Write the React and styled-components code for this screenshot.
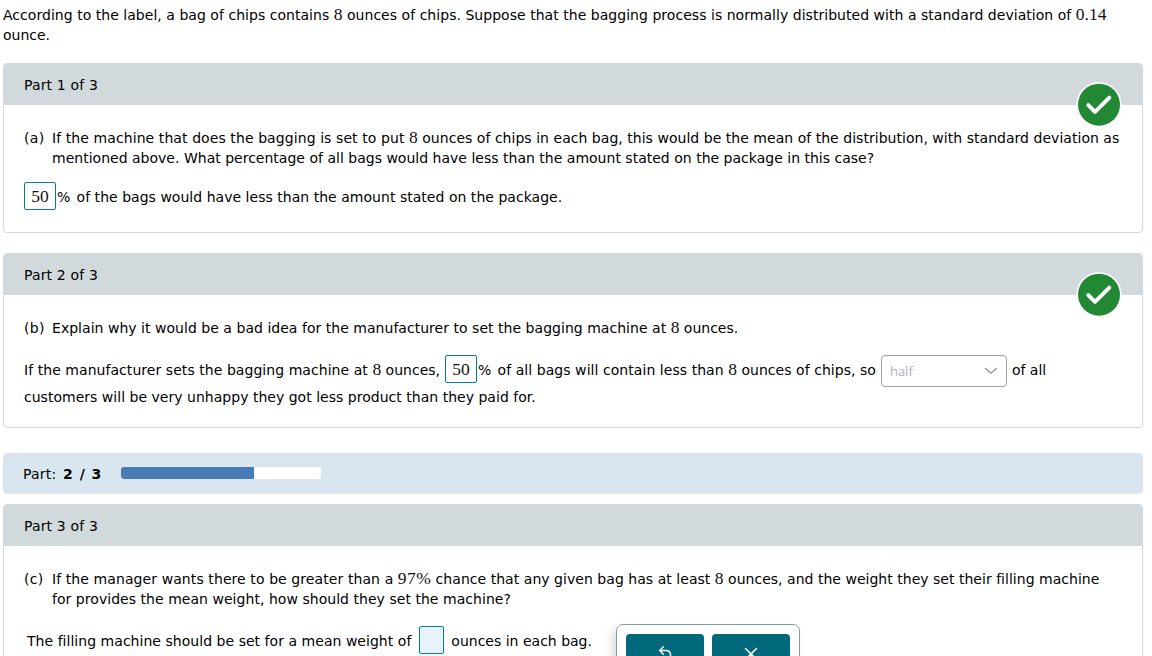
import React from "react";
import styled, { createGlobalStyle } from "styled-components";

const GlobalStyle = createGlobalStyle`
  * { box-sizing: border-box; }
  body {
    margin: 0;
    background: #fff;
    color: #000;
    font-family: Verdana, "DejaVu Sans", sans-serif;
    font-size: 14px;
    line-height: 20px;
    overflow: hidden;
  }
`;

const Page = styled.main`
  width: 1152px;
  height: 656px;
  overflow: hidden;
  padding: 5px 9px 0 3px;
`;

const Line = styled.div`
  white-space: pre;
  height: 20px;
`;

const Text = styled.span`
  letter-spacing: ${(p) => p.$spacing}px;
`;

const Percent = styled.span`
  letter-spacing: 1.8px;
`;

const Intro = styled.header`
  height: 58px;
`;

const Panel = styled.section`
  position: relative;
  height: ${(p) => p.$height}px;
  margin-bottom: ${(p) => p.$gap || 0}px;
  border: 1px solid #d1d9dc;
  border-radius: 4px;
`;

const PanelHeader = styled.div`
  height: 41px;
  padding: 11px 20px 0;
  background: #d1d9dc;
  border-radius: 3px 3px 0 0;
  letter-spacing: 0.15px;
`;

const PanelBody = styled.div`
  padding: 23px 20px 0;
`;

const Question = styled.div`
  display: grid;
  grid-template-columns: 28px 1fr;
  margin-bottom: ${(p) => p.$gap}px;
`;

const Marker = styled.span`
  letter-spacing: 0.3px;
`;

const Badge = styled.div`
  position: absolute;
  top: 18px;
  right: 20px;
  width: 46px;
  height: 46px;
  svg { display: block; }
`;

const Num = styled.span`
  font-family: "Liberation Serif", serif;
  font-size: 17.5px;
  line-height: 1;
  letter-spacing: ${(p) => p.$spacing || 0}px;
  color: #111;
`;

const AnswerRow = styled.div`
  display: flex;
  align-items: flex-start;
  height: ${(p) => p.$height}px;
  padding-left: ${(p) => p.$indent || 0}px;

  > ${Line} {
    margin-top: 5px;
  }
`;

const Answer = styled.span`
  display: inline-flex;
  align-items: center;
  justify-content: center;
  flex: none;
  width: ${(p) => (p.$empty ? 25 : 32)}px;
  height: 28px;
  margin: 0 ${(p) => p.$after || 1}px 0 ${(p) => p.$before || 0}px;
  padding-top: 2px;
  border: 1px solid #007f8f;
  border-radius: 2px;
  background: ${(p) => (p.$empty ? "#e6f4f9" : "#fff")};
`;

const Select = styled.div`
  display: flex;
  align-items: center;
  justify-content: space-between;
  width: 126px;
  height: 32px;
  margin: 0 5px;
  padding: 0 8px;
  border: 1px solid #9c9e9f;
  border-radius: 4px;
  color: #b0b2b3;
  font-family: "Open Sans", sans-serif;
  font-size: 13px;
`;

const ProgressBar = styled.div`
  display: flex;
  align-items: center;
  height: 41px;
  margin-bottom: 10px;
  padding-left: 20px;
  border-radius: 4px;
  background: #dae6ef;
`;

const ProgressLabel = styled.span`
  width: 98px;
  letter-spacing: 0.2px;
  white-space: pre;
`;

const Count = styled.b`
  margin-left: 2px;
  letter-spacing: 0.5px;
  word-spacing: 1px;
`;

const Track = styled.div`
  width: 200px;
  height: 12px;
  margin-top: -1px;
  overflow: hidden;
  border-radius: 3px;
  background: #fff;
`;

const Fill = styled.div`
  width: 133px;
  height: 100%;
  background: #477cb7;
`;

const Toolbar = styled.div`
  position: absolute;
  top: 119px;
  left: 612px;
  display: flex;
  gap: 8px;
  width: 184px;
  height: 60px;
  padding: 9px;
  border: 1px solid #7f9ca3;
  border-radius: 7px;
  background: #fff;
  box-shadow: -4px 5px 8px rgba(60, 90, 100, 0.2);
`;

const ToolButton = styled.button`
  display: flex;
  justify-content: center;
  width: 78px;
  height: 40px;
  padding: 11px 0 0;
  border: 0;
  border-radius: 4px;
  background: #006a7c;
`;

const CheckBadge = () => (
  <Badge>
    <svg width="46" height="46" viewBox="0 0 46 46">
      <circle cx="23" cy="22.7" r="22.7" fill="#fff" />
      <circle cx="23" cy="22.7" r="21" fill="#228833" />
      <path d="M12.3 23.2 19 29.8 33.3 15.7" fill="none" stroke="#fff" strokeWidth="4" strokeLinecap="round" strokeLinejoin="round" />
    </svg>
  </Badge>
);

export default function App() {
  return (
    <>
      <GlobalStyle />
      <Page>
        <Intro>
          <Line>
            <Text $spacing={0.035}>According to the label, a bag of chips contains </Text>
            <Num>8</Num>
            <Text $spacing={0.036}> ounces of chips. Suppose that the bagging process is normally distributed with a standard deviation of </Text>
            <Num>0.14</Num>
          </Line>
          <Line>ounce.</Line>
        </Intro>

        <Panel $height={170} $gap={20}>
          <PanelHeader>Part 1 of 3</PanelHeader>
          <CheckBadge />
          <PanelBody>
            <Question $gap={14}>
              <Marker>(a)</Marker>
              <div>
                <Line>
                  <Text $spacing={0.085}>If the machine that does the bagging is set to put </Text>
                  <Num>8</Num>
                  <Text $spacing={0.032}> ounces of chips in each bag, this would be the mean of the distribution, with standard deviation as</Text>
                </Line>
                <Line>
                  <Text $spacing={0.01}>mentioned above. What percentage of all bags would have less than the amount stated on the package in this case?</Text>
                </Line>
              </div>
            </Question>
            <AnswerRow $height={28}>
              <Answer><Num>50</Num></Answer>
              <Line>
                <Percent>%</Percent>
                <Text $spacing={0.028}> of the bags would have less than the amount stated on the package.</Text>
              </Line>
            </AnswerRow>
          </PanelBody>
        </Panel>

        <Panel $height={175} $gap={25}>
          <PanelHeader>Part 2 of 3</PanelHeader>
          <CheckBadge />
          <PanelBody>
            <Question $gap={17}>
              <Marker>(b)</Marker>
              <Line>
                <Text $spacing={0.03}>Explain why it would be a bad idea for the manufacturer to set the bagging machine at </Text>
                <Num>8</Num> ounces.
              </Line>
            </Question>
            <AnswerRow $height={32}>
              <Line>
                <Text $spacing={0.055}>If the manufacturer sets the bagging machine at </Text>
                <Num>8</Num> ounces,
              </Line>
              <Answer $before={5}><Num>50</Num></Answer>
              <Line>
                <Percent>%</Percent>
                <Text $spacing={0.055}> of all bags will contain less than </Text>
                <Num>8</Num>
                <Text $spacing={0.04}> ounces of chips, so</Text>
              </Line>
              <Select>
                half
                <svg width="14" height="8" viewBox="0 0 14 8">
                  <path d="M1.5 1.5 7 6 12.5 1.5" fill="none" stroke="#999" strokeWidth="1.6" strokeLinecap="round" />
                </svg>
              </Select>
              <Line>of all</Line>
            </AnswerRow>
            <Line>
              <Text $spacing={0.02}>customers will be very unhappy they got less product than they paid for.</Text>
            </Line>
          </PanelBody>
        </Panel>

        <ProgressBar>
          <ProgressLabel>Part: <Count>2 / 3</Count></ProgressLabel>
          <Track><Fill /></Track>
        </ProgressBar>

        <Panel $height={220}>
          <PanelHeader>Part 3 of 3</PanelHeader>
          <PanelBody>
            <Question $gap={17}>
              <Marker>(c)</Marker>
              <div>
                <Line>
                  <Text $spacing={0.09}>If the manager wants there to be greater than a </Text>
                  <Num $spacing={0.4}>97%</Num>
                  <Text $spacing={0.04}> chance that any given bag has at least </Text>
                  <Num>8</Num>
                  <Text $spacing={0.02}> ounces, and the weight they set their filling machine</Text>
                </Line>
                <Line>
                  <Text $spacing={0.04}>for provides the mean weight, how should they set the machine?</Text>
                </Line>
              </div>
            </Question>
            <AnswerRow $height={28} $indent={3}>
              <Line>
                <Text $spacing={0.035}>The filling machine should be set for a mean weight of</Text>
              </Line>
              <Answer $empty $before={8} $after={7} />
              <Line>ounces in each bag.</Line>
            </AnswerRow>
          </PanelBody>
          <Toolbar>
            <ToolButton aria-label="Undo">
              <svg width="16" height="16" viewBox="0 0 16 16" fill="none" stroke="#fff" strokeWidth="1.5" strokeLinecap="round" strokeLinejoin="round">
                <path d="M6.3 1.7 2.7 5.5l3.6 3.800M2.7 5.5h6.300c3 0 4.500 2 4.500 4.500V13" />
              </svg>
            </ToolButton>
            <ToolButton aria-label="Clear">
              <svg width="16" height="16" viewBox="0 0 16 16" fill="none" stroke="#fff" strokeWidth="1.6" strokeLinecap="round">
                <path d="m2.5 3.5 11 11M13.5 3.5l-11 11" />
              </svg>
            </ToolButton>
          </Toolbar>
        </Panel>
      </Page>
    </>
  );
}
